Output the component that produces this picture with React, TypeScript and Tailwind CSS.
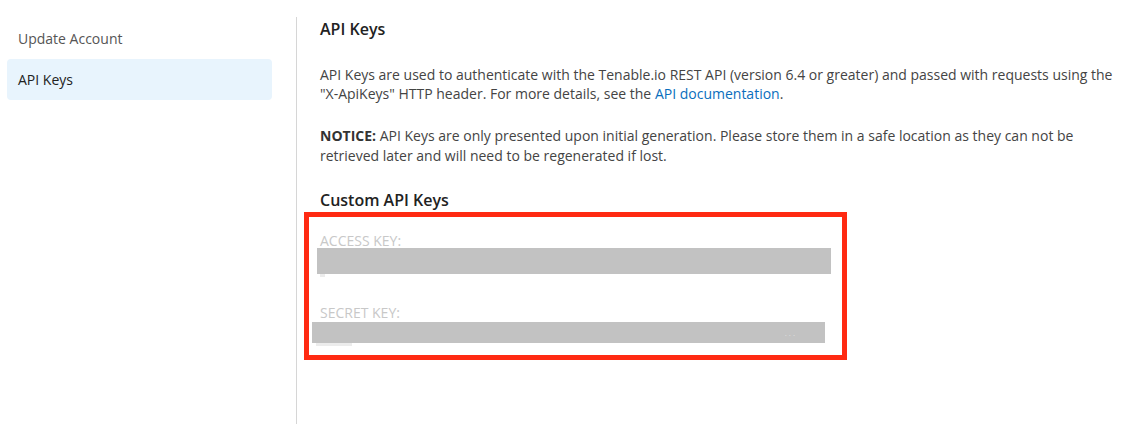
export default function App() {
  const font = { fontFamily: '"Open Sans", "Noto Sans", Arial, sans-serif' };
  return (
    <div className="w-[1130px] h-[424px] bg-white overflow-hidden" style={font}>
      <div className="flex mt-[17px] h-[407px]">
        {/* Sidebar */}
        <div className="w-[297px] shrink-0 border-r border-[#d6d6d6] pt-px">
          <div className="ml-[7px] w-[265px] h-[41px] flex items-center px-[11px] text-[14px] text-[#555]">
            Update Account
          </div>
          <div className="ml-[7px] w-[265px] h-[41px] flex items-center px-[11px] rounded-[4px] bg-[#e8f4fd] text-[14px] text-[#222]">
            API Keys
          </div>
        </div>

        {/* Content */}
        <div className="pl-[23px] flex-1">
          <h2 className="text-[16px] leading-[24px] font-semibold text-[#222]">API Keys</h2>
          <p className="mt-[24px] text-[14px] leading-[19px] text-[#444] w-[800px]">
            API Keys are used to authenticate with the Tenable.io REST API (version 6.4 or greater) and passed with requests using the
            "X-ApiKeys" HTTP header. For more details, see the{' '}
            <a className="text-[#0a6ebd]">API documentation</a>.
          </p>
          <p className="mt-[23px] text-[14px] leading-[20px] text-[#444] w-[780px]">
            <span className="font-bold text-[#333]">NOTICE:</span> API Keys are only presented upon initial generation. Please store them in a safe location as they can not be
            retrieved later and will need to be regenerated if lost.
          </p>
          <h3 className="mt-[22px] text-[16px] leading-[24px] font-semibold text-[#222]">Custom API Keys</h3>

          <div className="ml-[-16px] w-[543px] border-[5px] border-[#ff2a12] pt-[17px] pb-[9px]">
            <div className="ml-[11px] text-[14px] leading-[14px] text-[#c8c8c8] uppercase">Access Key:</div>
            <div className="ml-[8px] w-[514px] h-[26px] bg-[#c2c2c2]" />
            <div className="ml-[11px] w-[5px] h-[3px] bg-[#ececec]" />
            <div className="mt-[29px] ml-[11px] text-[14px] leading-[14px] text-[#c8c8c8] uppercase">Secret Key:</div>
            <div className="mt-[2px] ml-[3px] w-[513px] h-[21px] bg-[#c2c2c2] flex items-center justify-end pr-[28px]">
              <span className="text-[8px] leading-none text-[#e0e0e0] tracking-[2px]">...</span>
            </div>
            <div className="ml-[7px] w-[36px] h-[3px] bg-[#ececec]" />
          </div>
        </div>
      </div>
    </div>
  );
}
